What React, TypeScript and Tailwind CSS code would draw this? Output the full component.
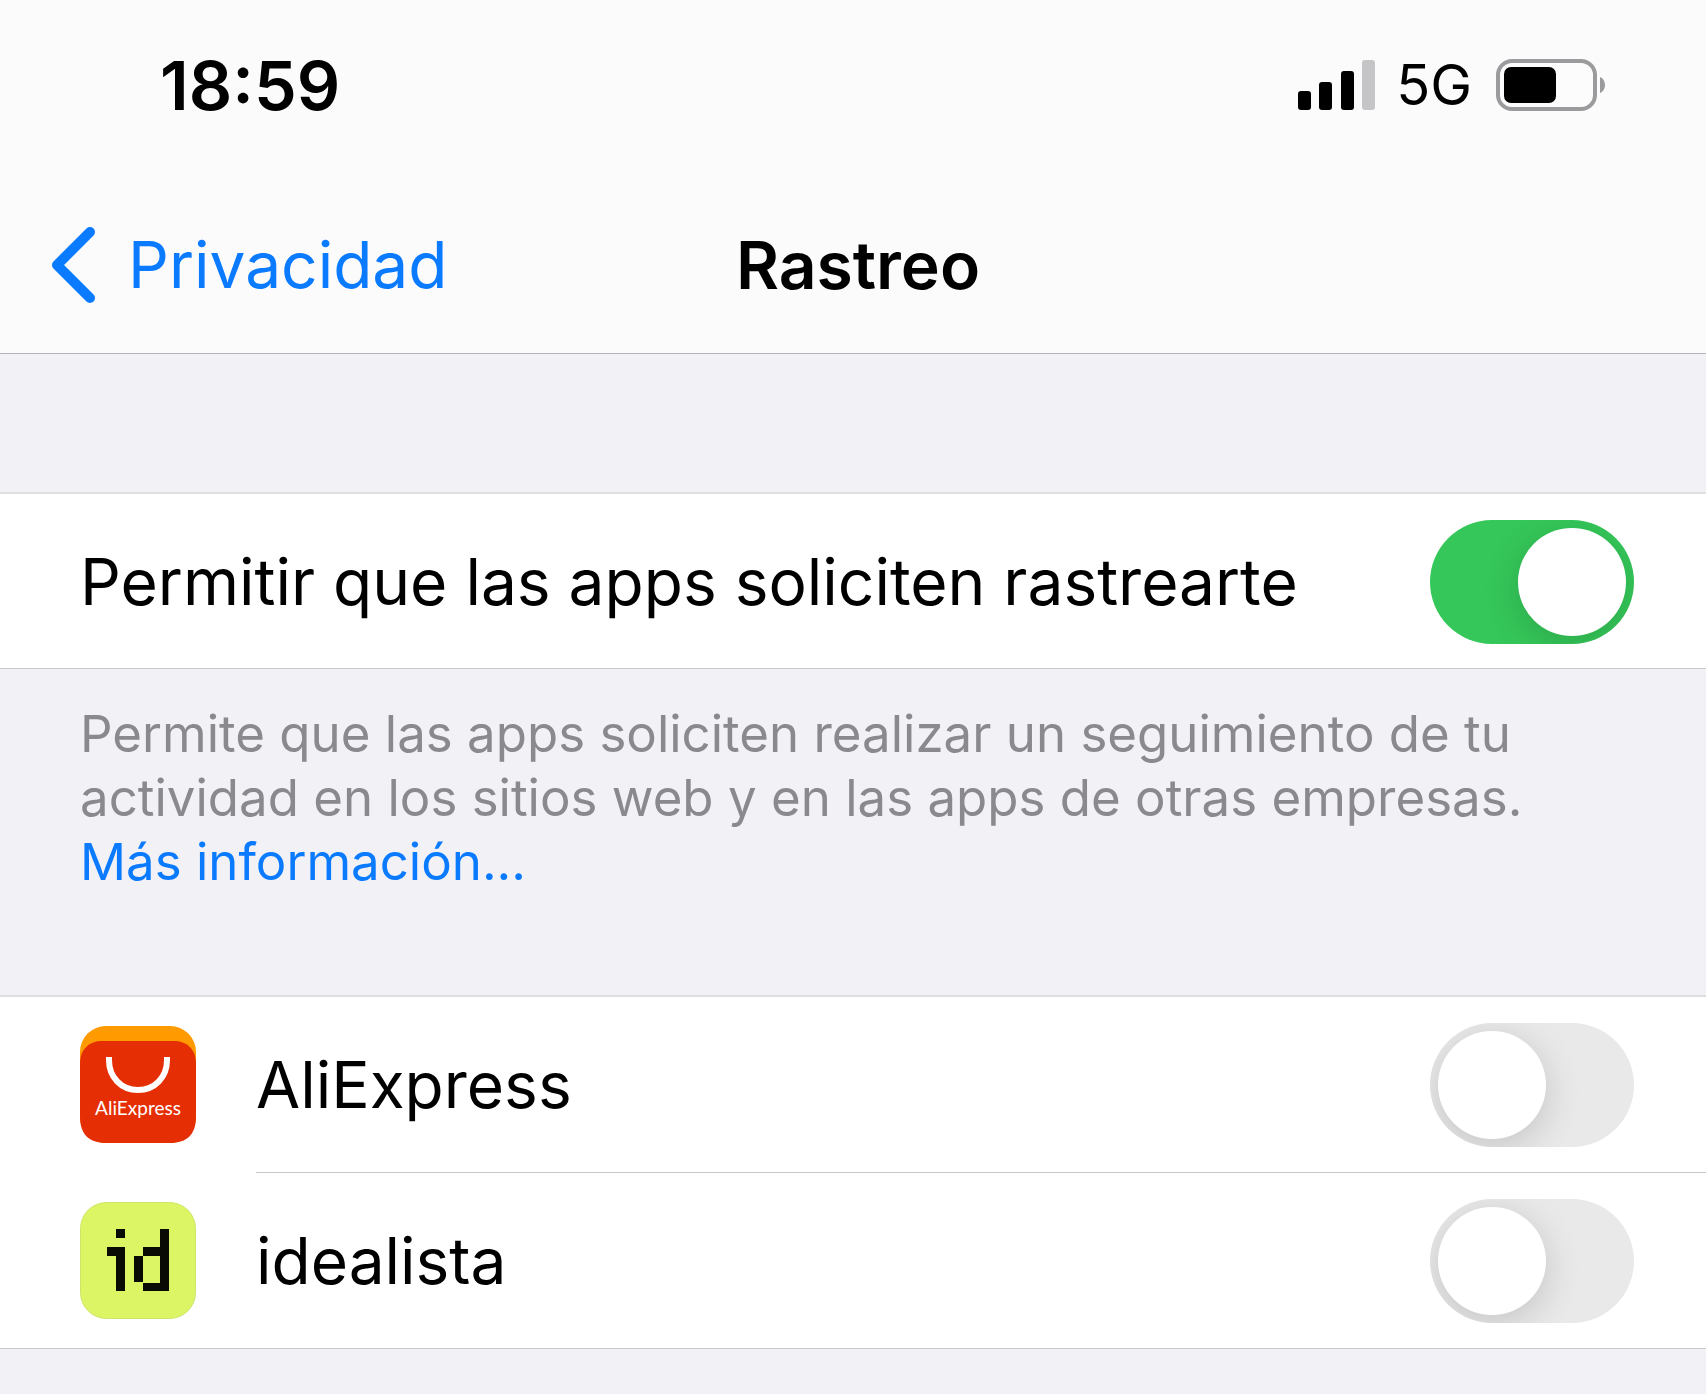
import { useState, type ReactNode } from 'react';
import { clsx } from 'clsx';

function SignalIcon() {
  return (
    <svg width="78" height="52" viewBox="0 0 78 52" aria-hidden="true">
      <rect x="0" y="32" width="13" height="19" rx="3" fill="#000" />
      <rect x="21" y="23" width="13" height="28" rx="3" fill="#000" />
      <rect x="43" y="12" width="13" height="39" rx="3" fill="#000" />
      <rect x="64" y="1" width="13" height="50" rx="3" fill="#c5c5c7" />
    </svg>
  );
}

function BatteryIcon() {
  return (
    <svg width="110" height="52" viewBox="0 0 110 52" aria-hidden="true">
      <rect x="2" y="2" width="97" height="48" rx="14" fill="#fcfcfd" stroke="#9b9b9d" strokeWidth="4" />
      <rect x="8" y="8" width="52" height="36" rx="7" fill="#000" />
      <path d="M104 18c3 1.2 5 4.400 5 8s-2 6.800-5 8z" fill="#9b9b9d" />
    </svg>
  );
}

function ChevronIcon() {
  return (
    <svg width="46" height="78" viewBox="0 0 46 78" fill="none" aria-hidden="true">
      <path
        d="M40 6 7 39 40 72"
        stroke="currentColor"
        strokeWidth="10"
        strokeLinecap="round"
        strokeLinejoin="round"
      />
    </svg>
  );
}

function AliExpressLogo() {
  return (
    <svg width="116" height="117" viewBox="0 0 116 117" aria-hidden="true">
      <rect width="116" height="117" rx="26" fill="#ff9a00" />
      <path d="M0 38C0 23 9 15 23 15H93c14 0 23 8 23 23V91c0 17-9 26-26 26H26C9 117 0 108 0 91z" fill="#e62e04" />
      <path d="M29 31V34c0 17 12 30 29 30S87 51 87 34V31" fill="none" stroke="#fff" strokeWidth="6" />
      <text
        x="58"
        y="89"
        textAnchor="middle"
        fill="#fff"
        fontSize="19"
        className="font-[Lato,sans-serif]"
      >
        AliExpress
      </text>
    </svg>
  );
}

function IdealistaLogo() {
  return (
    <svg width="116" height="117" viewBox="0 0 116 117" aria-hidden="true">
      <rect x="0.5" y="0.5" width="115" height="116" rx="26" fill="#dbf564" stroke="#cde66a" />
      <g fill="#0a0a05" shapeRendering="crispEdges">
        <rect x="36" y="27" width="9" height="9" />
        <rect x="27" y="45" width="18" height="9" />
        <rect x="36" y="45" width="9" height="44" />
        <rect x="54" y="54" width="9" height="26" />
        <rect x="63" y="45" width="26" height="9" />
        <rect x="63" y="81" width="26" height="8" />
        <rect x="80" y="27" width="9" height="62" />
      </g>
    </svg>
  );
}

interface SwitchProps {
  id: string;
  checked: boolean;
  onChange: (checked: boolean) => void;
}

function Switch({ id, checked, onChange }: SwitchProps) {
  return (
    <span
      className={clsx(
        'relative flex h-[124px] w-51 shrink-0 items-center overflow-hidden rounded-full px-2 transition-colors',
        checked ? 'justify-end bg-[#35c759]' : 'justify-start bg-[#e9e9e9]'
      )}
    >
      <input
        id={id}
        type="checkbox"
        role="switch"
        checked={checked}
        onChange={(e) => onChange(e.target.checked)}
        className="absolute inset-0 cursor-pointer appearance-none rounded-full"
      />
      <span className="pointer-events-none size-27 rounded-full bg-white shadow-[0_8px_36px_rgba(0,0,0,0.16)]" />
    </span>
  );
}

const APPS: { id: string; name: string; logo: ReactNode }[] = [
  { id: 'aliexpress', name: 'AliExpress', logo: <AliExpressLogo /> },
  { id: 'idealista', name: 'idealista', logo: <IdealistaLogo /> },
];

export default function App() {
  const [allowRequests, setAllowRequests] = useState(true);
  const [allowed, setAllowed] = useState<Record<string, boolean>>({});

  return (
    <div className="min-h-screen bg-[#f2f1f6] font-[Inter,sans-serif] text-[64px] leading-20 text-black">
      <header className="border-b border-[#b4b4ba] bg-[#fbfbfc] pt-[45px] pb-12">
        <div className="flex items-center justify-between pr-25 pl-40">
          <time className="text-[68px] font-semibold">18:59</time>
          <div className="flex items-center">
            <SignalIcon />
            <span className="ml-5 text-[56px]">5G</span>
            <span className="ml-6">
              <BatteryIcon />
            </span>
          </div>
        </div>
        <nav className="mt-25 grid grid-cols-[1fr_auto_1fr] items-center pr-10 pl-[50px]">
          <a href="#privacidad" className="flex items-center gap-8 text-[#0a7aff]">
            <ChevronIcon />
            Privacidad
          </a>
          <h1 className="text-[66px] font-semibold">Rastreo</h1>
        </nav>
      </header>

      <main>
        <section className="mt-[138px]">
          <div className="flex items-center justify-between border-t-2 border-b border-t-[#dfdfe1] border-b-[#c8c8cb] bg-white pt-[26px] pb-6 pr-18 pl-20">
            <label htmlFor="allow-requests">Permitir que las apps soliciten rastrearte</label>
            <Switch id="allow-requests" checked={allowRequests} onChange={setAllowRequests} />
          </div>
          <p className="px-20 pt-[33px] text-[51px] leading-16 text-[#8a8a8e]">
            Permite que las apps soliciten realizar un seguimiento de tu actividad en los sitios web y en las apps de
            otras empresas.{' '}
            <a href="#mas-informacion" className="block text-[#0a7aff]">
              Más información...
            </a>
          </p>
        </section>

        <ul className="mt-[101px] border-t-2 border-b border-t-[#dfdfe1] border-b-[#c8c8cb] bg-white">
          {APPS.map((app, i) => (
            <li key={app.id} className="flex items-center pl-20">
              {app.logo}
              <div
                className={clsx(
                  'ml-15 flex flex-1 items-center justify-between pt-[26px] pb-[25px] pr-18',
                  i > 0 && 'border-t border-[#c8c8cb]'
                )}
              >
                <label htmlFor={app.id}>{app.name}</label>
                <Switch
                  id={app.id}
                  checked={!!allowed[app.id]}
                  onChange={(value) => setAllowed({ ...allowed, [app.id]: value })}
                />
              </div>
            </li>
          ))}
        </ul>
      </main>
    </div>
  );
}
